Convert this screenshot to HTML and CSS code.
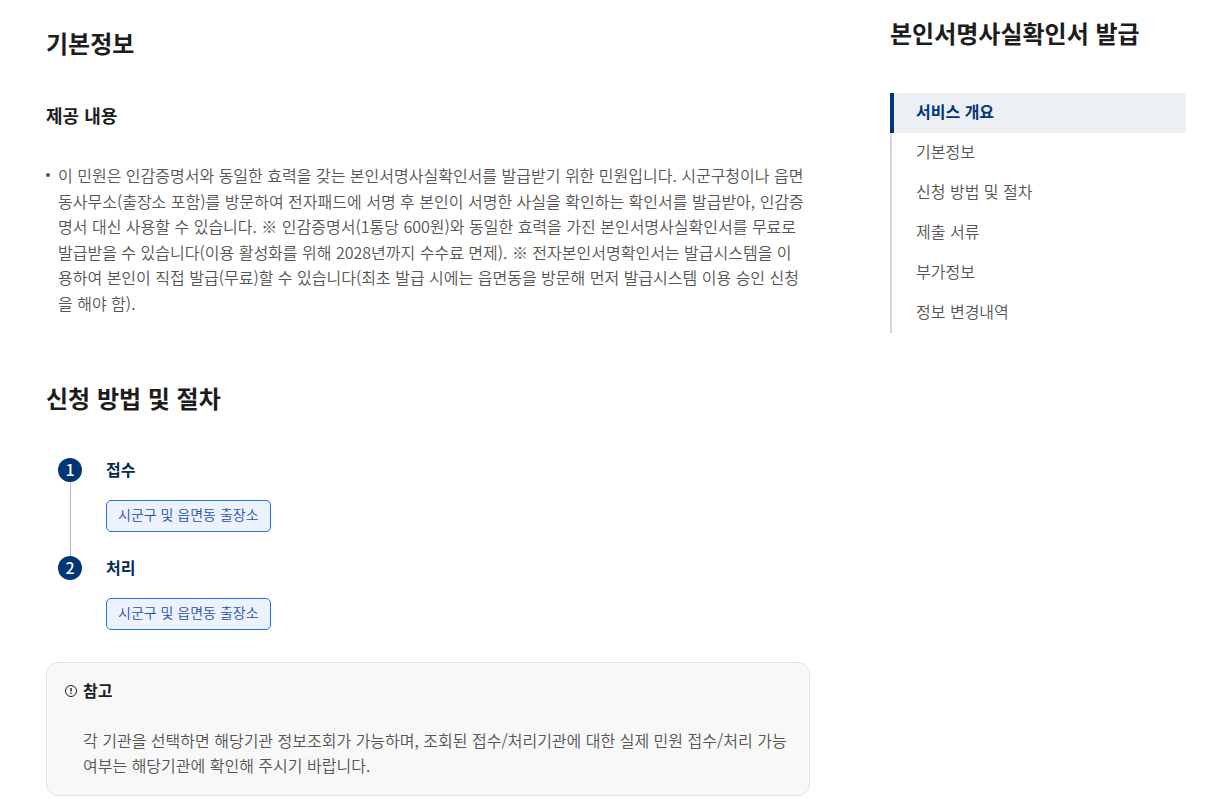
FILE: index.html
```html
<!DOCTYPE html>
<html lang="ko">
<head>
    <meta charset="UTF-8">
    <title>본인서명사실확인서 발급</title>
    <meta name="viewport" content="width=device-width, initial-scale=1">
    <link rel="stylesheet" href="styles.css">
</head>
<body>

<div class="page">
  <main class="content">
    <section class="info">
      <h2>기본정보</h2>
      <h3>제공 내용</h3>
      <ul class="dot-list">
        <li>이 민원은 인감증명서와 동일한 효력을 갖는 본인서명사실확인서를 발급받기 위한 민원입니다. 시군구청이나 읍면동사무소(출장소 포함)를 방문하여 전자패드에 서명 후 본인이 서명한 사실을 확인하는 확인서를 발급받아, 인감증명서 대신 사용할 수 있습니다. ※ 인감증명서(1통당 600원)와 동일한 효력을 가진 본인서명사실확인서를 무료로 발급받을 수 있습니다(이용 활성화를 위해 2028년까지 수수료 면제). ※ 전자본인서명확인서는 발급시스템을 이용하여 본인이 직접 발급(무료)할 수 있습니다(최초 발급 시에는 읍면동을 방문해 먼저 발급시스템 이용 승인 신청을 해야 함).</li>
      </ul>
    </section>

    <section class="process">
      <h2>신청 방법 및 절차</h2>
      <ol class="steps">
        <li class="step">
          <span class="step-num">1</span>
          <div class="step-body">
            <h4>접수</h4>
            <button type="button" class="org">시군구 및 읍면동 출장소</button>
          </div>
        </li>
        <li class="step">
          <span class="step-num">2</span>
          <div class="step-body">
            <h4>처리</h4>
            <button type="button" class="org">시군구 및 읍면동 출장소</button>
          </div>
        </li>
      </ol>

      <div class="note">
        <svg class="note-icon" viewBox="0 0 12 12" aria-hidden="true">
          <circle cx="6" cy="6" r="5.5" fill="none" stroke="currentColor"/>
          <path d="M6 3v3.6M6 7.8v1.2" stroke="currentColor" stroke-width="1.4"/>
        </svg>
        <div class="note-body">
          <h4>참고</h4>
          <p>각 기관을 선택하면 해당기관 정보조회가 가능하며, 조회된 접수/처리기관에 대한 실제 민원 접수/처리 가능 여부는 해당기관에 확인해 주시기 바랍니다.</p>
        </div>
      </div>
    </section>
  </main>

  <aside class="side">
    <h2>본인서명사실확인서 발급</h2>
    <nav>
      <ul class="side-nav">
        <li><a href="#" class="active">서비스 개요</a></li>
        <li><a href="#">기본정보</a></li>
        <li><a href="#">신청 방법 및 절차</a></li>
        <li><a href="#">제출 서류</a></li>
        <li><a href="#">부가정보</a></li>
        <li><a href="#">정보 변경내역</a></li>
      </ul>
    </nav>
  </aside>
</div>

</body>
</html>
```
FILE: styles.css
```css
* {
  box-sizing: border-box;
}

body {
  margin: 0;
  background: #fff;
  color: #555;
  font-family: "Noto Sans CJK KR", sans-serif;
  font-size: 16px;
  font-weight: 350;
  line-height: 1.6;
}

h2, h3, h4, p, ul, ol {
  margin: 0;
  padding: 0;
}

ul, ol {
  list-style: none;
}

h2, h3, h4 {
  color: #1d1d1d;
}

h2 {
  font-size: 24px;
  line-height: 36px;
}

h3 {
  font-size: 18px;
  line-height: 28px;
}

h4 {
  font-size: 16px;
  line-height: 22px;
}

.page {
  display: grid;
  grid-template-columns: minmax(0, 1fr) 296px;
  gap: 80px;
  padding: 0 43px 0 46px;
}

/* Main column */
.content {
  padding-top: 25px;
}

.info h3 {
  margin: 40px 0 34px;
}

.dot-list li {
  position: relative;
  padding: 0 4px 0 12px;
}

.dot-list li::before {
  content: "";
  position: absolute;
  left: 0;
  top: 10px;
  width: 4px;
  height: 4px;
  border-radius: 50%;
  background: #555;
}

.process {
  margin-top: 63px;
}

/* Numbered steps */
.steps {
  margin: 42px 0 32px;
  padding-left: 12px;
}

.step {
  position: relative;
  display: flex;
  gap: 24px;
}

.step + .step {
  margin-top: 24px;
}

/* line down to the next number */
.step:not(:last-child)::before {
  content: "";
  position: absolute;
  left: 12px;
  top: 24px;
  bottom: -24px;
  width: 1px;
  background: #b1bccb;
}

.step-num {
  width: 24px;
  height: 24px;
  border-radius: 50%;
  background: #003675;
  color: #fff;
  font-weight: 500;
  line-height: 22px;
  text-align: center;
}

.step h4 {
  margin-bottom: 20px;
  color: #052b57;
}

.org {
  display: block;
  height: 32px;
  padding: 0 11px 3px;
  border: 1px solid #256ef4;
  border-radius: 5px;
  background: #ecf2fe;
  color: #2450b0;
  font-family: inherit;
  font-size: 14px;
  font-weight: inherit;
}

/* Note box */
.note {
  display: flex;
  gap: 6px;
  padding: 16px 18px;
  border: 1px solid #e4e4e4;
  border-radius: 12px;
  background: #f8f8f8;
}

.note-icon {
  flex: none;
  width: 12px;
  height: 12px;
  margin-top: 6px;
  color: #1d1d1d;
}

.note p {
  margin-top: 27px;
}

/* Side navigation */
.side {
  padding-top: 15px;
}

.side-nav {
  margin-top: 42px;
  background: linear-gradient(#cdd7e4, #cdd7e4) left / 2px 100% no-repeat;
}

.side-nav a {
  display: block;
  padding: 6px 26px 10px;
  color: #555;
  line-height: 24px;
  text-decoration: none;
}

.side-nav .active {
  padding-left: 22px;
  border-left: 4px solid #003675;
  background: #eceff4;
  color: #003675;
  font-weight: 700;
}
```
